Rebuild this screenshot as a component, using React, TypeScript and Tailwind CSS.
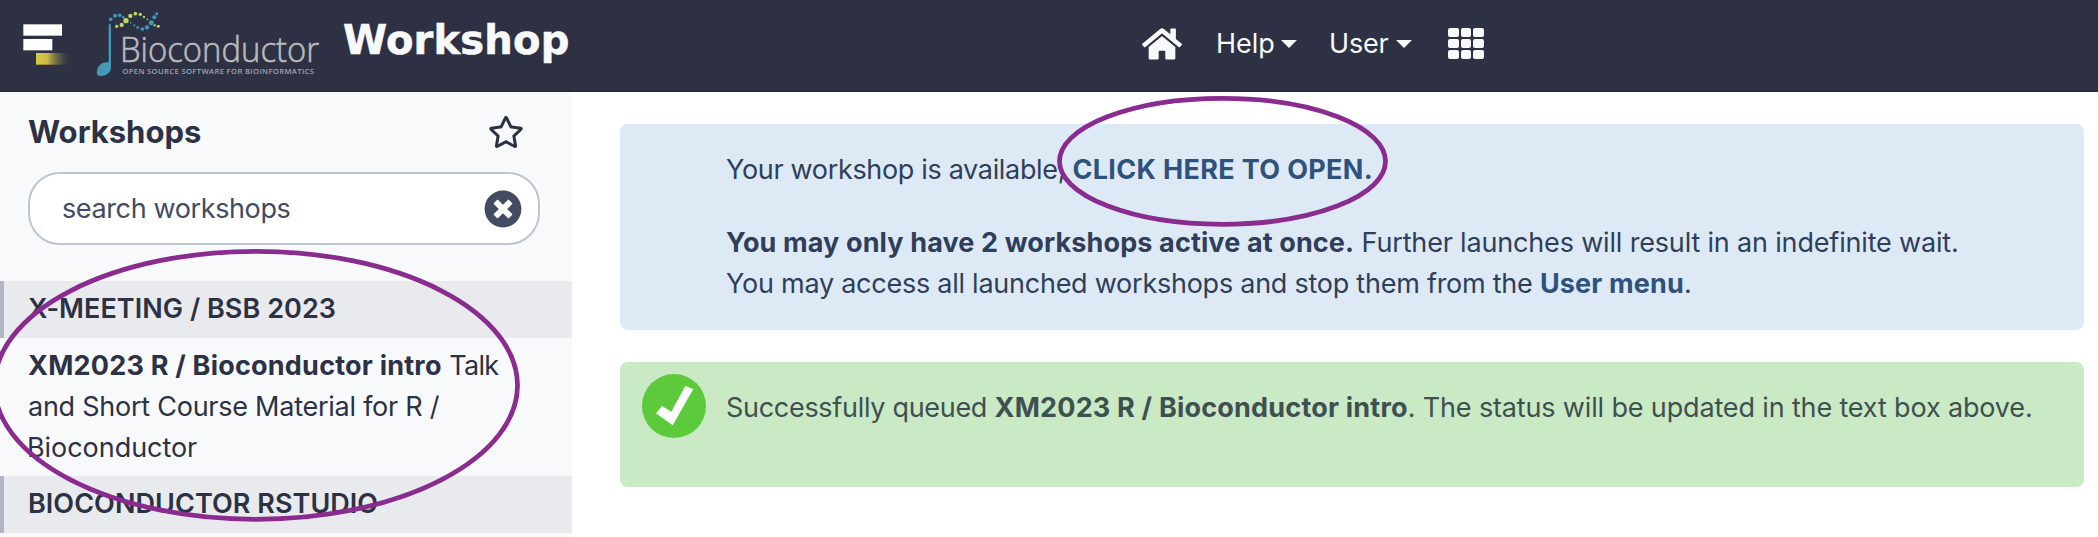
import { FaHome, FaRegStar, FaTimesCircle } from "react-icons/fa";

const BLUE_DOTS = [
  [332, 58, 5.5], [345, 47, 6], [359, 46, 5.5], [370, 52, 4], [392, 68, 2.5], [403, 76, 3], [413, 83, 4],
  [427, 87, 5.5], [441, 82, 6.5], [454, 68, 7.5], [463, 52, 6], [470, 41, 4.5],
];
const GREEN_DOTS = [
  [350, 79, 5], [365, 75, 6.5], [378, 62, 8], [391, 48, 6.5], [406, 41, 5.5], [421, 43, 5], [432, 51, 3.5],
  [442, 58, 2.5], [464, 76, 3.5], [475, 79, 4.5],
];

function GalaxyMark() {
  return (
    <svg className="ml-[22px] mt-[22px] h-[45px] w-[53px] shrink-0 blur-[0.6px]" viewBox="66 66 159 135">
      <defs>
        <linearGradient id="fade" x1="0" x2="1" y1="0" y2="0">
          <stop offset="0" stopColor="#d6c648" />
          <stop offset="0.3" stopColor="#cdbd46" />
          <stop offset="1" stopColor="#2c3143" stopOpacity="0" />
        </linearGradient>
      </defs>
      <rect x="70" y="73" width="116" height="34" fill="#fff" />
      <rect x="70" y="117" width="87" height="34" fill="#fff" />
      <rect x="108" y="159" width="112" height="35" fill="url(#fade)" />
    </svg>
  );
}

function BioconductorLogo() {
  return (
    <svg className="ml-[21px] mt-[10px] h-[68px] w-[224px] shrink-0 overflow-visible" viewBox="288 30 672 204">
      {BLUE_DOTS.map(([x, y, r]) => (
        <circle key={x} cx={x} cy={y} r={r} fill="#3f9ab9" />
      ))}
      {GREEN_DOTS.map(([x, y, r]) => (
        <circle key={x} cx={x} cy={y} r={r} fill="#bcd667" />
      ))}
      <path d="M326 73h7v132c-2 15-17 24-33 23c-9-1-10-6-9-15c2-17 15-27 35-27z" fill="#4598b6" />
      <text x="360" y="187" fontFamily="Open Sans, sans-serif" fontWeight="300" fontSize="106" fill="#b9babd" stroke="#b9babd" strokeWidth="1.8" textLength="597" lengthAdjust="spacingAndGlyphs">
        Bioconductor
      </text>
      <text x="367" y="222" fontFamily="Open Sans, sans-serif" fontWeight="600" fontSize="23" fill="#a3a5ac" textLength="575" lengthAdjust="spacing">
        OPEN SOURCE SOFTWARE FOR BIOINFORMATICS
      </text>
    </svg>
  );
}

function Caret() {
  return (
    <svg className="h-2 w-4" viewBox="0 0 16 8">
      <path d="M0 0h16L8 8z" fill="#f8f9fa" />
    </svg>
  );
}

function Masthead() {
  return (
    <header className="flex h-[92px] items-start border-b-2 border-[#282c3e] bg-[#2e3143] text-[#f8f9fa]">
      <GalaxyMark />
      <BioconductorLogo />
      <h1 className="ml-[23px] mt-[20px] w-[799px] shrink-0 font-['DejaVu_Sans',sans-serif] text-[40px] font-bold leading-[40px] tracking-[0.2px] [-webkit-text-stroke:0.6px_#f8f9fa]">
        Workshop
      </h1>
      <nav className="mt-[23px] flex h-[41px] items-center leading-[41px]">
        <FaHome size={40} />
        <div className="ml-[34px] flex w-[81px] items-center justify-between">
          <span>Help</span>
          <Caret />
        </div>
        <div className="ml-[32px] flex w-[83px] items-center justify-between">
          <span className="tracking-[-0.2px]">User</span>
          <Caret />
        </div>
        <div className="ml-[36px] grid h-8 w-9 grid-cols-3 grid-rows-3 gap-[2px]">
          {[0, 1, 2, 3, 4, 5, 6, 7, 8].map((n) => (
            <span key={n} className="rounded-[2px] bg-[#f8f9fa]" />
          ))}
        </div>
      </nav>
    </header>
  );
}

function SectionTitle({ children }: { children: string }) {
  return (
    <div className="h-[57px] border-l-4 border-[#b0b6c3] bg-[#e9eaed] pl-[24px] pt-[7px] font-semibold tracking-[0.05px]">
      {children}
    </div>
  );
}

function Sidebar() {
  return (
    <aside className="w-[572px] shrink-0 bg-[#f8f9fb] text-[#2c3143]">
      <div className="flex h-[80px] items-start justify-between pl-[28px] pr-[48px] pt-[20px]">
        <h2 className="text-[31px] font-bold leading-[40px]">Workshops</h2>
        <FaRegStar size={36} className="mt-[2px]" />
      </div>
      <div className="ml-7 flex h-[73px] w-[512px] items-center justify-between rounded-[32px] border-2 border-[#bdc5d0] bg-white pl-8 pr-[16px] text-[#434a63]">
        <span className="tracking-[-0.38px]">search workshops</span>
        <FaTimesCircle size={38} />
      </div>
      <div className="mt-9">
        <SectionTitle>X-MEETING / BSB 2023</SectionTitle>
        <div className="h-[138px] whitespace-nowrap pl-[28px] pt-[7px]">
          <b className="font-bold tracking-[0.22px]">XM2023 R / Bioconductor intro</b>{" "}
          <span className="tracking-[-0.7px]">Talk</span>
          <br />
          <span className="tracking-[-0.25px]">and Short Course Material for R /</span>
          <br />
          <span className="-ml-px tracking-[-0.05px]">Bioconductor</span>
        </div>
        <SectionTitle>BIOCONDUCTOR RSTUDIO</SectionTitle>
      </div>
    </aside>
  );
}

function CheckBadge() {
  return (
    <svg className="mt-3 h-16 w-16 shrink-0" viewBox="0 0 64 64">
      <circle cx="32" cy="32" r="32" fill="#5dca3b" />
      <path d="M51.3 15L43.3 12L29.3 37.7L20 32L14 39.3L30.7 51.3z" fill="#fff" />
    </svg>
  );
}

function Messages() {
  return (
    <main className="flex flex-1 flex-col gap-8 whitespace-nowrap pl-12 pr-[14px] pt-8">
      <section className="h-[206px] rounded-lg bg-[#ddeaf5] pl-[106px] pt-[25px] text-[#2f3e5a]">
        <p className="tracking-[-0.33px]">
          Your workshop is available, <a className="font-bold tracking-[0.33px] text-[#2f527c]">CLICK HERE TO OPEN.</a>
        </p>
        <p className="mt-8 tracking-[-0.17px]">
          <b className="font-bold tracking-[0.12px]">You may only have 2 workshops active at once.</b> Further launches will
          result in an indefinite wait.
        </p>
        <p className="tracking-[-0.25px]">
          You may access all launched workshops and stop them from the{" "}
          <a className="font-bold tracking-[0.15px] text-[#2f527c]">User menu</a>.
        </p>
      </section>
      <section className="flex h-[125px] rounded-lg bg-[#cae9c5] pl-[22px] text-[#3e504f]">
        <CheckBadge />
        <p className="ml-[20px] mt-[25px] tracking-[-0.15px]">
          <span className="tracking-[-0.3px]">Successfully queued</span>{" "}
          <b className="font-bold tracking-[0.2px]">XM2023 R / Bioconductor intro</b>. The status will be updated in the
          text box above.
        </p>
      </section>
    </main>
  );
}

function Highlights() {
  return (
    <svg className="pointer-events-none absolute left-0 top-0 h-[537px] w-[2098px]" viewBox="0 0 2098 537" fill="none" stroke="#8a2b8f" strokeWidth="4.8">
      <ellipse cx="256" cy="385.3" rx="261.5" ry="134" />
      <ellipse cx="1222.5" cy="161.3" rx="163" ry="63" />
    </svg>
  );
}

export default function App() {
  return (
    <div className="relative flex h-[537px] w-[2098px] flex-col overflow-hidden bg-white font-[Inter,sans-serif] text-[27px] leading-[41px]">
      <Masthead />
      <div className="flex flex-1">
        <Sidebar />
        <Messages />
      </div>
      <Highlights />
    </div>
  );
}
